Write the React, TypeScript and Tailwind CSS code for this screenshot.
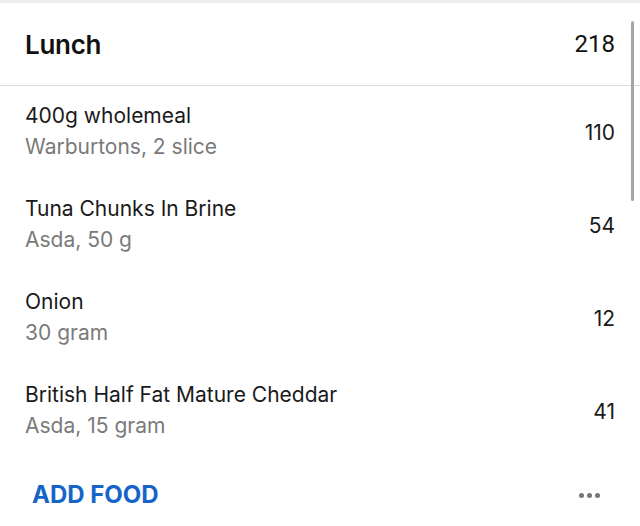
import React from "react";

const items = [
  { name: "400g wholemeal", sub: "Warburtons, 2 slice", cal: 110 },
  { name: "Tuna Chunks In Brine", sub: "Asda, 50 g", cal: 54 },
  { name: "Onion", sub: "30 gram", cal: 12 },
  { name: "British Half Fat Mature Cheddar", sub: "Asda, 15 gram", cal: 41 },
];

export default function App() {
  return (
    <div className="relative w-[640px] h-[526px] overflow-hidden bg-white" style={{ fontFamily: "Inter, 'Noto Sans', sans-serif" }}>
      <div className="h-[3px] bg-[#ececf0]" />
      <div className="h-[83px] flex items-center justify-between pl-[25px] pr-[25px] border-b border-[#dcdcdc]">
        <span className="text-[26px] font-semibold text-[#111] tracking-[-0.3px]">Lunch</span>
        <span className="text-[24px] text-[#111]" style={{ fontFamily: "Roboto, Inter, sans-serif" }}>218</span>
      </div>
      <div>
        {items.map((it) => (
          <div key={it.name} className="h-[93px] flex items-center justify-between pl-[25px] pr-[25px]">
            <div className="flex flex-col -mt-[4px]">
              <span className="text-[21px] leading-[31px] text-[#1a1a1a]">{it.name}</span>
              <span className="text-[21px] leading-[31px] text-[#7a7a7a]">{it.sub}</span>
            </div>
            <span className="text-[21px] text-[#1a1a1a]">{it.cal}</span>
          </div>
        ))}
      </div>
      <div className="h-[70px] pt-[4px] flex items-center justify-between pl-[32px] pr-[40px]">
        <span className="text-[24px] font-bold text-[#1565c8] tracking-[0px]">ADD FOOD</span>
        <div className="flex gap-[3px]">
          <span className="w-[5px] h-[5px] rounded-full bg-[#777]" />
          <span className="w-[5px] h-[5px] rounded-full bg-[#777]" />
          <span className="w-[5px] h-[5px] rounded-full bg-[#777]" />
        </div>
      </div>
      <div className="absolute left-[631px] top-[21px] w-[3px] h-[180px] rounded-full bg-[#a6a6a6]" />
    </div>
  );
}
